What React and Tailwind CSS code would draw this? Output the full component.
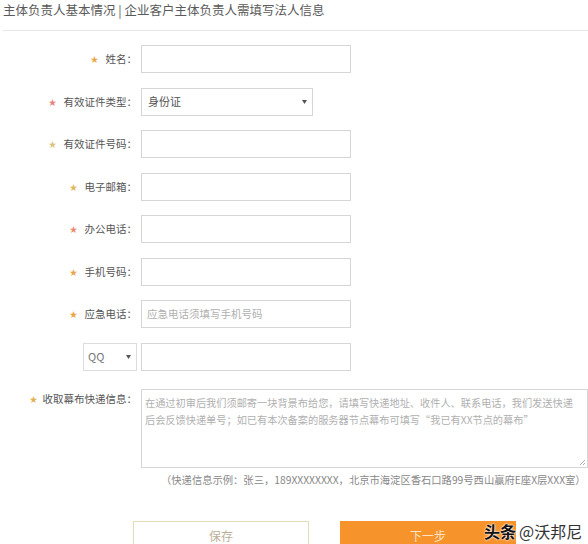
import React from "react";

const FONT = { fontFamily: '"Noto Sans CJK SC", "Noto Sans", sans-serif' };

const rows = [
  { label: "姓名", star: "text-[#e9a94a]" },
  { label: "有效证件类型", star: "text-[#e7837a]", select: "身份证" },
  { label: "有效证件号码", star: "text-[#d9c27a]" },
  { label: "电子邮箱", star: "text-[#dfb65a]" },
  { label: "办公电话", star: "text-[#ea8a6a]" },
  { label: "手机号码", star: "text-[#e9a450]" },
  { label: "应急电话", star: "text-[#e9a440]", placeholder: "应急电话须填写手机号码" },
];

function Label({ text, star }) {
  return (
    <div className="w-[141px] shrink-0 flex items-center justify-end pr-[4px] text-[10.5px] text-[#555]">
      <span className={`text-[8px] mr-[7px] ${star}`}>★</span>
      <span>{text}：</span>
    </div>
  );
}

function Arrow() {
  return (
    <svg width="5" height="4" viewBox="0 0 5 4" className="shrink-0">
      <path d="M0 0 H5 L2.5 4 Z" fill="#555" />
    </svg>
  );
}

export default function App() {
  return (
    <div className="relative w-[588px] h-[544px] overflow-hidden bg-white" style={FONT}>
      <div className="pl-[3px] pt-[1px] h-[30px] text-[12.5px] leading-[18px] text-[#5a5a5a]">
        主体负责人基本情况 | 企业客户主体负责人需填写法人信息
      </div>
      <div className="ml-[3px] h-px bg-[#e6e6e6]" />

      <div className="flex flex-col gap-[14.5px] pt-[14px]">
        {rows.map((r) => (
          <div key={r.label} className="flex h-[28px]">
            <Label text={r.label} star={r.star} />
            {r.select ? (
              <div className="w-[172px] h-full border border-[#d6d6d6] flex items-center justify-between pl-[6px] pr-[5px] text-[11px] text-[#555]">
                <span>{r.select}</span>
                <Arrow />
              </div>
            ) : (
              <div className="w-[210px] h-full border border-[#d6d6d6] flex items-center pl-[5px] text-[10.5px] text-[#b0b0b0]">
                {r.placeholder}
              </div>
            )}
          </div>
        ))}

        <div className="flex h-[28px]">
          <div className="w-[141px] shrink-0 flex justify-end pr-[4px]">
            <div className="w-[54px] h-full border border-[#dcdcdc] flex items-center justify-between pl-[4px] pr-[5px] text-[11px] text-[#777]">
              <span>QQ</span>
              <Arrow />
            </div>
          </div>
          <div className="w-[210px] h-full border border-[#d6d6d6]" />
        </div>
      </div>

      <div className="flex mt-[18.5px] h-[79px]">
        <div className="w-[141px] shrink-0 flex items-start justify-end pr-[4px] pt-[2px] text-[10.5px] text-[#555]">
          <span className="text-[8px] mr-[5px] mt-[2px] text-[#e0b050]">★</span>
          <span>收取幕布快递信息：</span>
        </div>
        <div className="relative flex-1 h-full border border-[#d6d6d6] px-[3px] pt-[4px] text-[10.2px] leading-[17px] text-[#b0b0b0]">
          <div>在通过初审后我们须邮寄一块背景布给您，请填写快递地址、收件人、联系电话，我们发送快递</div>
          <div>后会反馈快递单号；如已有本次备案的服务器节点幕布可填写“我已有XX节点的幕布”</div>
          <svg width="7" height="7" viewBox="0 0 7 7" className="absolute right-[1px] bottom-[1px]">
            <path d="M6 1 L1 6 M6 4 L4 6" stroke="#999" strokeWidth="0.8" />
          </svg>
        </div>
      </div>

      <div className="pl-[161px] mt-[3px] h-[17px] text-[10.3px] leading-[17px] text-[#888] whitespace-nowrap">
        （快递信息示例：张三，189XXXXXXXX，北京市海淀区香石口路99号西山赢府E座X层XXX室）
      </div>

      <div className="flex gap-[31px] pl-[133px] mt-[33px]">
        <div className="w-[176px] h-[30px] border border-[#e3dcb8] flex items-center justify-center text-[12px] text-[#bbb09a]">
          保存
        </div>
        <div className="w-[176px] h-[30px] bg-[#f7932b] flex items-center justify-center text-[12px] text-[#fde3c4]">
          下一步
        </div>
      </div>

      <div
        className="absolute left-[484px] top-[521px] flex items-center gap-[3px] text-[16px] leading-[20px] whitespace-nowrap"
        style={{ textShadow: "0 0 2px #fff, 0 0 2px #fff" }}
      >
        <span className="font-bold text-[#111]">头条</span>
        <span className="text-[#333]">@沃邦尼</span>
      </div>
    </div>
  );
}
